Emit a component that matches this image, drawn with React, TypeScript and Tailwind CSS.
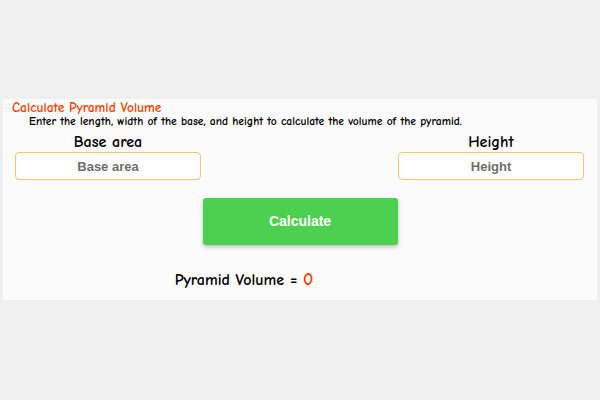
const comic = "font-['Comic_Sans_MS','Comic_Neue','Noto_Sans',sans-serif]";

function Field({ label }: { label: string }) {
  return (
    <div className="flex w-[186px] flex-col items-center">
      <div className={`${comic} text-[16px] font-bold leading-[18px] text-black`}>{label}</div>
      <input
        placeholder={label}
        className="mt-[1px] h-[28px] w-full rounded-[4px] border border-[#f4c76c] bg-white text-center font-['Liberation_Sans',Arial,sans-serif] text-[13px] font-bold text-[#666] placeholder:text-[#6e6e6e] outline-none"
      />
    </div>
  );
}

export default function App() {
  return (
    <div className="h-[400px] w-[600px] bg-[#f0f0f0] px-[3px] pt-[99px]">
      <div className="flex h-[201px] flex-col bg-[#fbfbfb]">
        <div className={`${comic} ml-[9px] mt-[1px] text-[13.5px] font-bold leading-[15px] text-[#ff4500]`}>
          Calculate Pyramid Volume
        </div>
        <div className={`${comic} ml-[26px] text-[11.6px] font-bold leading-[14px] text-black`}>
          Enter the length, width of the base, and height to calculate the volume of the pyramid.
        </div>
        <div className="mt-[4px] flex justify-between pl-[12px] pr-[13px]">
          <Field label="Base area" />
          <Field label="Height" />
        </div>
        <div className="mt-[18px] flex justify-center">
          <button className="h-[47px] w-[195px] rounded-[3px] bg-[#4bd14f] font-['Liberation_Sans',Arial,sans-serif] text-[14px] font-bold text-white shadow-[0_2px_4px_rgba(0,0,0,0.25)]">
            Calculate
          </button>
        </div>
        <div className={`${comic} mt-[25px] flex items-baseline justify-center pr-[112px] text-[16px] font-bold leading-[20px] text-black`}>
          <span>Pyramid Volume =&nbsp;</span>
          <span className="text-[18px] text-[#ff3c00]">0</span>
        </div>
      </div>
    </div>
  );
}
